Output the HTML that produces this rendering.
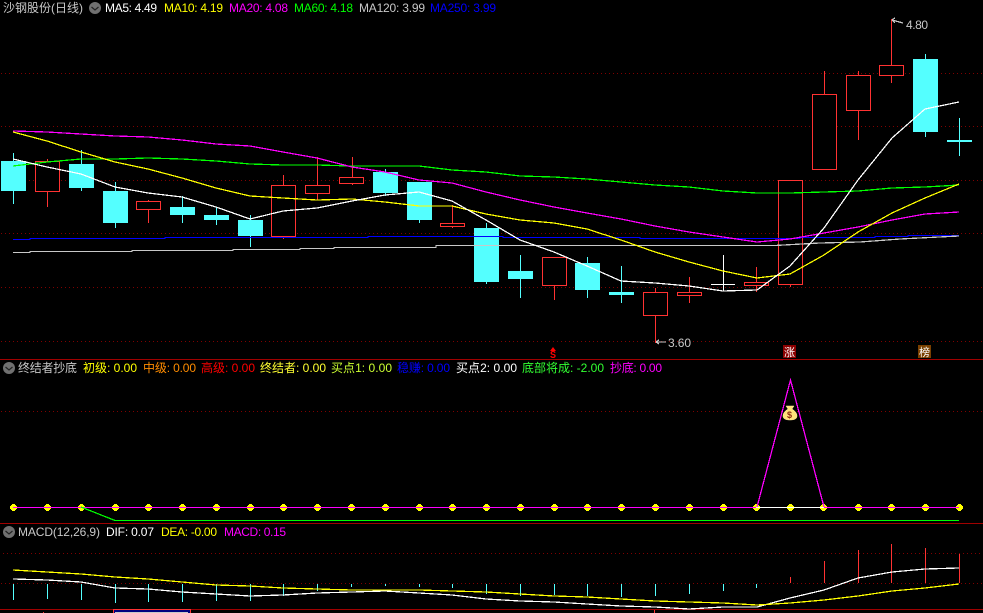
<!DOCTYPE html>
<html><head><meta charset="utf-8"><style>
html,body{margin:0;padding:0;background:#000;width:983px;height:613px;overflow:hidden}
svg{display:block}
text{font-family:"Liberation Sans","Noto Sans CJK SC",sans-serif;font-size:12px}
.l{fill:none;shape-rendering:crispEdges;stroke-width:1.25}
.c{fill:#54ffff;stroke:none;shape-rendering:crispEdges}
.r{fill:#000;stroke:#ff3232;stroke-width:1;shape-rendering:crispEdges}
.wc{stroke:#54ffff;stroke-width:1;shape-rendering:crispEdges}
.wr{stroke:#ff3232;stroke-width:1;shape-rendering:crispEdges}
.g{stroke:#800000;stroke-width:1;stroke-dasharray:1 3;shape-rendering:crispEdges}
.s{stroke:#a00000;stroke-width:1;shape-rendering:crispEdges}
</style></head><body>
<svg width="983" height="613" viewBox="0 0 983 613" xmlns="http://www.w3.org/2000/svg">
<defs><path id="d" fill="#ffff00" shape-rendering="crispEdges" d="M-1 504h3v1h1v1h1v3h-1v1h-1v1h-3v-1h-1v-1h-1v-3h1v-1h1z"/></defs>
<rect width="983" height="613" fill="#000"/>
<!-- grid -->
<g class="g">
<line x1="1" x2="983" y1="73.5" y2="73.5"/><line x1="1" x2="983" y1="126.5" y2="126.5"/><line x1="1" x2="983" y1="180.5" y2="180.5"/><line x1="1" x2="983" y1="233.5" y2="233.5"/><line x1="1" x2="983" y1="287.5" y2="287.5"/><line x1="1" x2="983" y1="341.5" y2="341.5"/>
<line x1="1" x2="983" y1="411.5" y2="411.5"/>
<line x1="3" x2="983" y1="553.5" y2="553.5"/><line x1="1" x2="983" y1="583.5" y2="583.5"/>
</g>
<g class="s"><line x1="0" x2="983" y1="359.5" y2="359.5"/><line x1="0" x2="983" y1="523.5" y2="523.5"/><line x1="0" x2="983" y1="609.5" y2="609.5"/></g>
<!-- candle wicks -->
<g class="wc">
<line x1="13.5" x2="13.5" y1="153" y2="204"/><line x1="81.5" x2="81.5" y1="150" y2="191"/><line x1="115.5" x2="115.5" y1="182" y2="228"/><line x1="182.5" x2="182.5" y1="196" y2="223"/><line x1="216.5" x2="216.5" y1="207" y2="225"/><line x1="250.5" x2="250.5" y1="215" y2="247"/><line x1="385.5" x2="385.5" y1="169" y2="196"/><line x1="419.5" x2="419.5" y1="182" y2="223"/><line x1="486.5" x2="486.5" y1="223" y2="284"/><line x1="520.5" x2="520.5" y1="255" y2="298"/><line x1="587.5" x2="587.5" y1="257" y2="298"/><line x1="621.5" x2="621.5" y1="266" y2="303"/><line x1="925.5" x2="925.5" y1="54" y2="137"/><line x1="959.5" x2="959.5" y1="118" y2="156"/>
</g>
<g class="wr">
<line x1="47.5" x2="47.5" y1="159" y2="207"/><line x1="148.5" x2="148.5" y1="200" y2="223"/><line x1="283.5" x2="283.5" y1="175" y2="239"/><line x1="317.5" x2="317.5" y1="157" y2="200"/><line x1="352.5" x2="352.5" y1="157" y2="185"/><line x1="452.5" x2="452.5" y1="205" y2="228"/><line x1="554.5" x2="554.5" y1="257" y2="300"/><line x1="655.5" x2="655.5" y1="288" y2="343"/><line x1="689.5" x2="689.5" y1="277" y2="303"/><line x1="756.5" x2="756.5" y1="267" y2="292"/><line x1="790.5" x2="790.5" y1="180" y2="287"/><line x1="824.5" x2="824.5" y1="71" y2="94"/><line x1="858.5" x2="858.5" y1="71" y2="140"/><line x1="891.5" x2="891.5" y1="19" y2="83"/>
</g>
<!-- candle bodies -->
<g>
<rect class="c" x="1" y="161" width="25" height="30"/><rect class="c" x="69" y="164" width="25" height="24"/><rect class="c" x="103" y="191" width="25" height="32"/><rect class="c" x="170" y="207" width="25" height="8"/><rect class="c" x="204" y="215" width="25" height="5"/><rect class="c" x="238" y="220" width="25" height="16"/><rect class="c" x="373" y="172" width="25" height="21"/><rect class="c" x="407" y="182" width="25" height="38"/><rect class="c" x="474" y="228" width="25" height="54"/><rect class="c" x="508" y="271" width="25" height="8"/><rect class="c" x="575" y="263" width="25" height="27"/><rect class="c" x="609" y="292" width="25" height="3"/><rect class="c" x="913" y="59" width="25" height="73"/><rect class="c" x="947" y="140" width="25" height="2"/>
<rect class="r" x="35.5" y="161.5" width="24" height="30"/><rect class="r" x="136.5" y="201.5" width="24" height="8"/><rect class="r" x="271.5" y="185.5" width="24" height="51"/><rect class="r" x="305.5" y="185.5" width="24" height="8"/><rect class="r" x="339.5" y="177.5" width="24" height="6"/><rect class="r" x="440.5" y="223.5" width="24" height="3"/><rect class="r" x="542.5" y="257.5" width="24" height="28"/><rect class="r" x="643.5" y="292.5" width="24" height="23"/><rect class="r" x="677.5" y="292.5" width="24" height="3"/><rect class="r" x="744.5" y="282.5" width="24" height="3"/><rect class="r" x="778.5" y="180.5" width="24" height="104"/><rect class="r" x="812.5" y="94.5" width="24" height="75"/><rect class="r" x="846.5" y="75.5" width="24" height="35"/><rect class="r" x="879.5" y="65.5" width="24" height="10"/>
</g>
<line x1="711" x2="735" y1="284.5" y2="284.5" stroke="#fff" shape-rendering="crispEdges"/>
<line x1="723.5" x2="723.5" y1="255" y2="291" stroke="#fff" shape-rendering="crispEdges"/>
<!-- MAs -->
<polyline class="l" stroke="#0000ff" points="13,239.5 30,239.5 30,238.5 165,238.5 165,237.5 368,237.5 368,236.5 503,236.5 503,237.5 640,237.5 640,238.5 800,238.5 800,237.5 875,237.5 875,236.5 908,236.5 908,235.5 959,235.5"/>
<polyline class="l" stroke="#c8c8c8" points="13,252.5 30,252.5 30,251.5 132,251.5 132,250.5 233,250.5 233,249.5 300,249.5 300,248.5 334,248.5 334,247.5 436,247.5 436,245.5 775,245.5 820,243 860,242 900,239 959,236"/>
<polyline class="l" stroke="#00ff00" points="13,166 47,162 81,159 115,159 148,158 182,159 216,161 250,164 283,165 317,165 352,166 385,166 419,166 452,170 486,172 520,176 554,177 587,179 621,182 655,185 689,187 723,191 757,193 790,193 824,192 858,191 892,188 925,187 959,185"/>
<polyline class="l" stroke="#ff00ff" points="13,131 47,132 81,134 115,136 148,137 182,140 216,144 250,146 283,152 317,158 352,167 385,172 419,180 452,183 486,192 520,200 554,207 587,213 621,219 655,226 689,232 723,237 757,242 790,239 824,233 858,227 892,220 925,214 959,212"/>
<polyline class="l" stroke="#ffff00" points="13,132 47,141 81,152 115,162 148,169 182,178 216,188 250,196 283,198 317,200 352,199 385,202 419,206 452,206 486,214 520,220 554,223 587,229 621,240 655,252 689,262 723,271 757,278 790,274 824,255 858,232 892,213 925,198 959,184"/>
<polyline class="l" stroke="#ffffff" points="13,159 47,167 81,174 115,187 148,193 182,197 216,207 250,219 283,211 317,208 352,201 385,195 419,192 452,201 486,220 520,240 554,252 587,266 621,281 655,283 689,286 723,291 757,290 790,266 824,228 858,180 892,138 925,109 959,102"/>
<!-- hi/lo labels -->
<polyline class="l" stroke="#c8c8c8" points="892,20 903,23"/>
<polyline class="l" stroke="#c8c8c8" points="892,20 895,18"/>
<polyline class="l" stroke="#c8c8c8" points="892,20 895,23"/>
<text x="906" y="29" fill="#c8c8c8" textLength="22">4.80</text>
<polyline class="l" stroke="#c8c8c8" points="656,342 666,342"/>
<polyline class="l" stroke="#c8c8c8" points="656,342 659,340"/>
<polyline class="l" stroke="#c8c8c8" points="656,342 659,344"/>
<text x="668" y="347" fill="#c8c8c8" textLength="23">3.60</text>
<!-- markers -->
<polygon points="553,347 550,351 556,351" fill="#ff0000"/>
<text x="550" y="358" fill="#ff0000" textLength="6" lengthAdjust="spacingAndGlyphs" style="font-size:10px;font-weight:bold">S</text>
<rect x="783" y="345" width="13" height="13" fill="#8b0000"/>
<text x="784" y="356" fill="#fff" style="font-size:11px">涨</text>
<rect x="918" y="345" width="13" height="13" fill="#7a3f00"/>
<text x="919" y="356" fill="#fff" style="font-size:11px">榜</text>
<!-- header -->
<text x="3" y="12" fill="#c8c8c8" textLength="80">沙钢股份(日线)</text>
<circle cx="95" cy="8" r="6" fill="#707070"/><polyline points="91.5,7 95,10 98.5,7" fill="none" stroke="#222" stroke-width="1.2"/>
<text x="105" y="12" fill="#fff" textLength="52">MA5: 4.49</text>
<text x="164" y="12" fill="#ffff00" textLength="59">MA10: 4.19</text>
<text x="229" y="12" fill="#ff00ff" textLength="59">MA20: 4.08</text>
<text x="294" y="12" fill="#00ff00" textLength="59">MA60: 4.18</text>
<text x="359" y="12" fill="#c8c8c8" textLength="66">MA120: 3.99</text>
<text x="430" y="12" fill="#0000ff" textLength="66">MA250: 3.99</text>
<!-- panel 2 legend -->
<circle cx="9" cy="368" r="6" fill="#707070"/><polyline points="5.5,367 9,370 12.5,367" fill="none" stroke="#222" stroke-width="1.2"/>
<text x="18" y="372" fill="#c8c8c8" textLength="59">终结者抄底</text>
<text x="83" y="372" fill="#ffff00" textLength="54">初级: 0.00</text>
<text x="143" y="372" fill="#ff8c00" textLength="53">中级: 0.00</text>
<text x="201" y="372" fill="#ff0000" textLength="54">高级: 0.00</text>
<text x="260" y="372" fill="#ffff32" textLength="66">终结者: 0.00</text>
<text x="331" y="372" fill="#ccff32" textLength="61">买点1: 0.00</text>
<text x="397" y="372" fill="#0000ff" textLength="53">稳赚: 0.00</text>
<text x="456" y="372" fill="#ffffff" textLength="61">买点2: 0.00</text>
<text x="522" y="372" fill="#32ff32" textLength="82">底部将成: -2.00</text>
<text x="610" y="372" fill="#ff00ff" textLength="52">抄底: 0.00</text>
<!-- panel 2 -->
<g>
<use href="#d" x="13"/><use href="#d" x="47"/><use href="#d" x="81"/><use href="#d" x="115"/><use href="#d" x="148"/><use href="#d" x="182"/><use href="#d" x="216"/><use href="#d" x="250"/><use href="#d" x="283"/><use href="#d" x="317"/><use href="#d" x="351"/><use href="#d" x="385"/><use href="#d" x="419"/><use href="#d" x="452"/><use href="#d" x="486"/><use href="#d" x="520"/><use href="#d" x="554"/><use href="#d" x="587"/><use href="#d" x="621"/><use href="#d" x="655"/><use href="#d" x="689"/><use href="#d" x="723"/><use href="#d" x="756"/><use href="#d" x="790"/><use href="#d" x="823"/><use href="#d" x="858"/><use href="#d" x="891"/><use href="#d" x="925"/><use href="#d" x="959"/>
</g>
<polyline class="l" stroke="#ff00ff" points="13,507.5 756,507.5"/>
<polyline class="l" stroke="#ff00ff" points="824,507.5 959,507.5"/>
<polyline class="l" stroke="#ffffff" points="756,507.5 824,507.5"/>
<polyline class="l" stroke="#ff00ff" points="757,507 790.5,380 824,507"/>
<polyline class="l" stroke="#00ff00" points="81,507 115,520.5 959,520.5"/>
<!-- money bag -->
<path d="M786 406h8l-2 3c3 2 5 4 5 7 0 3-3 4-7 4s-7-1-7-4c0-3 2-5 5-7z" fill="#ffe27a" stroke="#fff3a0" stroke-width="0.5"/>
<text x="787" y="418" fill="#8a2a10" style="font-size:9px;font-weight:bold">$</text>
<!-- panel 3 legend -->
<circle cx="9" cy="532" r="6" fill="#707070"/><polyline points="5.5,531 9,534 12.5,531" fill="none" stroke="#222" stroke-width="1.2"/>
<text x="18" y="536" fill="#c8c8c8" textLength="82">MACD(12,26,9)</text>
<text x="106" y="536" fill="#ffffff" textLength="48">DIF: 0.07</text>
<text x="161" y="536" fill="#ffff00" textLength="56">DEA: -0.00</text>
<text x="224" y="536" fill="#ff00ff" textLength="62">MACD: 0.15</text>
<!-- macd bars -->
<g class="wc">
<line x1="13.5" x2="13.5" y1="584" y2="600"/><line x1="47.5" x2="47.5" y1="584" y2="599"/><line x1="81.5" x2="81.5" y1="584" y2="600"/><line x1="115.5" x2="115.5" y1="584" y2="603"/><line x1="148.5" x2="148.5" y1="584" y2="602"/><line x1="182.5" x2="182.5" y1="584" y2="602"/><line x1="216.5" x2="216.5" y1="584" y2="601"/><line x1="250.5" x2="250.5" y1="584" y2="601"/><line x1="283.5" x2="283.5" y1="584" y2="596"/><line x1="317.5" x2="317.5" y1="584" y2="591"/><line x1="351.5" x2="351.5" y1="584" y2="587"/><line x1="385.5" x2="385.5" y1="584" y2="586"/><line x1="419.5" x2="419.5" y1="584" y2="587"/><line x1="452.5" x2="452.5" y1="584" y2="588"/><line x1="486.5" x2="486.5" y1="584" y2="594"/><line x1="520.5" x2="520.5" y1="584" y2="596"/><line x1="554.5" x2="554.5" y1="584" y2="595"/><line x1="587.5" x2="587.5" y1="584" y2="596"/><line x1="621.5" x2="621.5" y1="584" y2="597"/><line x1="655.5" x2="655.5" y1="584" y2="596"/><line x1="689.5" x2="689.5" y1="584" y2="594"/><line x1="723.5" x2="723.5" y1="584" y2="591"/><line x1="756.5" x2="756.5" y1="584" y2="588"/>
</g>
<g class="wr">
<line x1="790.5" x2="790.5" y1="577" y2="583"/><line x1="824.5" x2="824.5" y1="561" y2="583"/><line x1="858.5" x2="858.5" y1="550" y2="583"/><line x1="891.5" x2="891.5" y1="544" y2="583"/><line x1="925.5" x2="925.5" y1="548" y2="583"/><line x1="959.5" x2="959.5" y1="554" y2="583"/>
</g>
<polyline class="l" stroke="#ffffff" points="13,579 47,580 81,582 115,588 148,589 182,592 216,594 250,596 283,595 317,593 352,592 385,591 419,593 452,595 486,599 520,601 554,602 587,604 621,606 655,607 689,609 723,607 757,607 790,598 824,590 858,578 892,572 925,569 959,568"/>
<polyline class="l" stroke="#ffff00" points="13,570 47,572 81,574 115,577 148,579 182,582 216,585 250,586 283,588 317,589 352,590 385,590 419,590 452,591 486,592 520,594 554,596 587,597 621,599 655,601 689,602 723,603 757,605 790,603 824,600 858,596 892,591 925,588 959,584"/>
<!-- bottom clipped label -->
<rect x="113.5" y="609.5" width="77" height="5" fill="#000080" stroke="#ff3232" shape-rendering="crispEdges"/>
<rect x="115" y="612" width="73" height="1" fill="#c8c8c8" shape-rendering="crispEdges"/>
<rect x="43" y="612" width="1" height="1" fill="#ff3232"/>
<rect x="654" y="610" width="1" height="3" fill="#ff3232"/>
</svg>
</body></html>
